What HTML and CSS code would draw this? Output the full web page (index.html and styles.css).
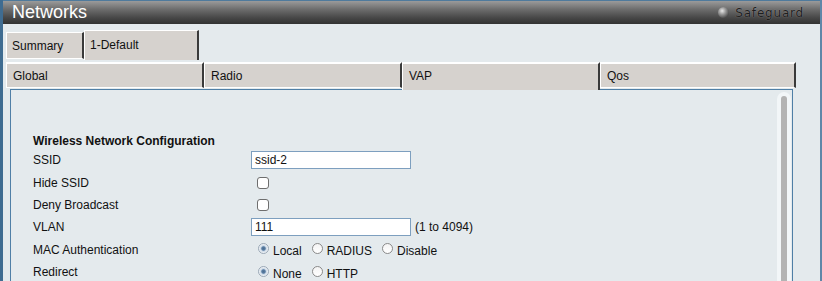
FILE: index.html
```html
<!DOCTYPE html>
<html>
<head>
<meta charset="utf-8">
<link rel="stylesheet" href="styles.css">
</head>
<body>
<div class="frame">
  <div class="titlebar">
    <span class="title">Networks</span>
    <span class="safeguard"><span class="ball"></span>Safeguard</span>
  </div>
  <div class="content">
    <div class="tabs1">
      <div class="tab t-summary">Summary</div>
      <div class="tab t-default active">1-Default</div>
    </div>
    <div class="tabs2">
      <div class="tab2">Global</div>
      <div class="tab2">Radio</div>
      <div class="tab2 active">VAP</div>
      <div class="tab2">Qos</div>
    </div>
    <div class="panel">
      <div class="form">
        <div class="heading">Wireless Network Configuration</div>
        <div class="row"><span class="label">SSID</span><span class="field"><span class="textbox">ssid-2</span></span></div>
        <div class="row"><span class="label">Hide SSID</span><span class="field"><span class="check"></span></span></div>
        <div class="row"><span class="label">Deny Broadcast</span><span class="field"><span class="check"></span></span></div>
        <div class="row"><span class="label">VLAN</span><span class="field"><span class="textbox">111</span><span class="hint">(1 to 4094)</span></span></div>
        <div class="row"><span class="label">MAC Authentication</span><span class="field radios"><span class="radio on"></span><span class="rl">Local</span><span class="radio"></span><span class="rl">RADIUS</span><span class="radio"></span><span class="rl">Disable</span></span></div>
        <div class="row"><span class="label">Redirect</span><span class="field radios"><span class="radio on"></span><span class="rl">None</span><span class="radio"></span><span class="rl">HTTP</span></span></div>
      </div>
      <div class="scroll"><div class="thumb"></div></div>
    </div>
  </div>
</div>
</body>
</html>
```
FILE: styles.css
```css
html, body {
  margin: 0;
  padding: 0;
  background: #e4eaed;
  overflow: hidden;
}
.frame {
  width: 817px;
  height: 281px;
  border-left: 3px solid #3f6c91;
  border-right: 2px solid #5f87a8;
  background: #e4eaed;
  font-family: "Liberation Sans", Arial, sans-serif;
  color: #111;
  overflow: hidden;
}
.titlebar {
  height: 24px;
  display: flex;
  align-items: center;
  justify-content: space-between;
  background: linear-gradient(#9b9b9b 0%, #6e6e6e 35%, #454545 75%, #333 100%);
  border-top: 1px solid #4f7a9c;
  box-sizing: border-box;
  padding: 0 16px 0 9px;
}
.title {
  color: #fff;
  font-size: 18px;
  line-height: 22px;
  margin-top: -2px;
}
.safeguard {
  display: flex;
  align-items: center;
  font-family: "DejaVu Sans", Verdana, sans-serif;
  font-size: 12px;
  letter-spacing: 0.8px;
  color: #1e1e1e;
  text-shadow: 0 0 1px rgba(200, 200, 200, 0.6);
}
.ball {
  width: 11px;
  height: 11px;
  border-radius: 50%;
  background: radial-gradient(circle at 38% 35%, #e8e8e8 0%, #9a9a9a 35%, #4a4a4a 75%, #2e2e2e 100%);
  margin-right: 6px;
}
.content {
  padding: 6px 0 0 3px;
}
.tabs1 {
  display: flex;
  align-items: flex-end;
  height: 30px;
}
.tab {
  box-sizing: border-box;
  background: #d6d2ce;
  font-size: 12px;
  border-top: 1px solid #fff;
  border-left: 1px solid #fff;
  border-right: 2px solid #3a3a3a;
  display: flex;
  align-items: center;
}
.t-summary {
  width: 78px;
  height: 27px;
  padding-left: 5px;
  border-bottom: 1px solid #fff;
  margin-bottom: 1px;
}
.t-default {
  width: 115px;
  height: 30px;
  padding-left: 5px;
  padding-bottom: 2px;
}
.tabs2 {
  display: flex;
  align-items: flex-start;
  height: 29px;
  padding-top: 2px;
  box-sizing: border-box;
  width: 790px;
}
.tab2 {
  box-sizing: border-box;
  width: 198px;
  height: 26px;
  background: #d6d2ce;
  font-size: 12px;
  border-top: 2px solid #fff;
  border-left: 1px solid #fff;
  border-right: 2px solid #3a3a3a;
  border-bottom: 1px solid #fff;
  padding-left: 6px;
  display: flex;
  align-items: center;
}
.tab2:last-child {
  width: 196px;
}
.tab2.active {
  height: 28px;
  border-bottom: none;
  padding-bottom: 2px;
}
.panel {
  margin-left: 4px;
  width: 783px;
  height: 200px;
  box-sizing: border-box;
  border: 1px solid #4f7fa6;
  border-bottom: none;
  display: flex;
  justify-content: space-between;
}
.form {
  padding: 44px 0 0 22px;
  font-size: 12px;
}
.heading {
  font-weight: bold;
  font-size: 12px;
  height: 15px;
  line-height: 15px;
}
.row {
  display: grid;
  grid-template-columns: 218px 1fr;
  height: 22.4px;
  align-items: center;
}
.field {
  display: flex;
  align-items: center;
}
.textbox {
  box-sizing: border-box;
  width: 160px;
  height: 18px;
  background: #fff;
  border: 1px solid #7d9fbf;
  font-size: 12px;
  line-height: 16px;
  padding-left: 3px;
}
.hint {
  margin-left: 4px;
}
.check {
  box-sizing: border-box;
  width: 12px;
  height: 12px;
  border: 1px solid #6e6e6e;
  border-radius: 3px;
  background: #fff;
  margin-left: 6px;
}
.radios {
  padding-left: 7px;
}
.radio {
  box-sizing: border-box;
  width: 11px;
  height: 11px;
  border-radius: 50%;
  border: 1px solid #8a8a8a;
  background: linear-gradient(#f4f4f4, #ffffff);
  margin-right: 4px;
  margin-top: -2px;
}
.radio.on {
  border-color: #9aa8b6;
  background: radial-gradient(circle, #4c6d8f 0%, #5a7ea4 28%, #c8d6e4 42%, #f2f5f8 70%);
}
.rl {
  margin-right: 10px;
  margin-top: 3px;
}
.scroll {
  width: 14px;
  margin-right: 1px;
  margin-top: 2px;
  background: #f2f6f8;
  border-radius: 7px 7px 0 0;
  box-sizing: border-box;
  padding: 4px 4px 0 4px;
}
.thumb {
  width: 6px;
  height: 190px;
  background: #b3b3b3;
  border-radius: 3px;
}
```
